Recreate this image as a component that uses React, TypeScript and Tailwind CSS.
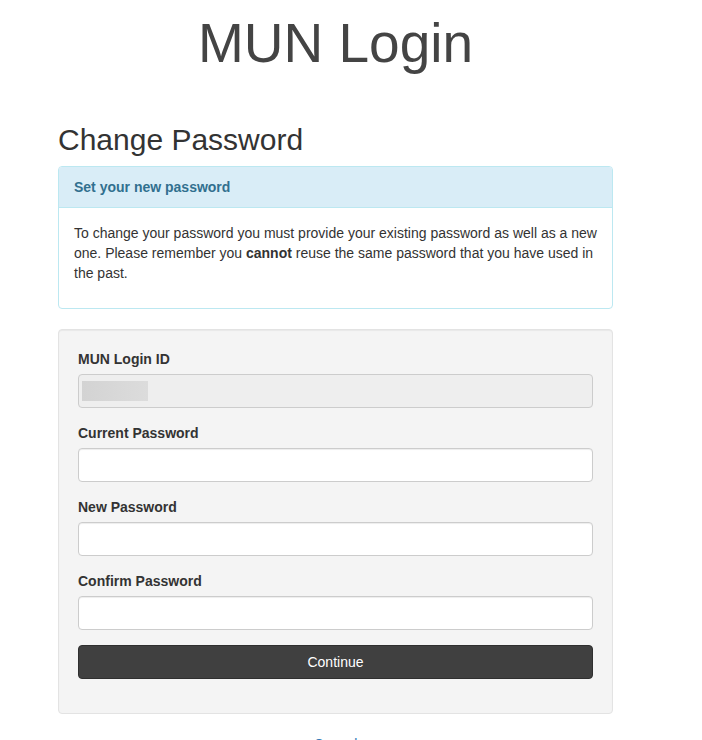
export default function App() {
  return (
    <div className="min-h-screen bg-white font-['Liberation_Sans',Arial,sans-serif] text-[14px] leading-[20px] text-[#333]">
      <div className="ml-[58px] w-[555px]">
        <h1 className="mt-[13px] mb-[50px] text-center text-[55px] leading-[60px] font-normal text-[#444]">
          MUN Login
        </h1>

        <h2 className="mb-[10px] text-[30px] leading-[33px] font-normal text-[#333]">
          Change Password
        </h2>

        <div className="mb-[20px] rounded border border-[#bce8f1] bg-white">
          <div className="rounded-t-[3px] border-b border-[#bce8f1] bg-[#d9edf7] px-[15px] py-[10px] font-bold text-[#31708f]">
            Set your new password
          </div>
          <div className="p-[15px]">
            <p className="mb-[10px]">
              To change your password you must provide your existing password as well as a new
              one. Please remember you <b>cannot</b> reuse the same password that you have used in
              the past.
            </p>
          </div>
        </div>

        <div className="rounded border border-[#e3e3e3] bg-[#f4f4f4] p-[19px] shadow-[inset_0_1px_1px_rgba(0,0,0,0.05)]">
          <div className="mb-[15px]">
            <label className="mb-[5px] block font-bold">MUN Login ID</label>
            <div className="flex h-[34px] items-center rounded border border-[#ccc] bg-[#eee] px-[3px]">
              <div className="h-[20px] w-[66px] bg-gradient-to-r from-[#d3d3d3] to-[#dcdcdc]" />
            </div>
          </div>

          <Field label="Current Password" />
          <Field label="New Password" />
          <Field label="Confirm Password" />

          <div className="mb-[15px]">
            <button className="block h-[34px] w-full rounded border border-[#2f2f2f] bg-[#404040] text-[14px] text-white">
              Continue
            </button>
          </div>
        </div>

        <div className="mt-[20px] text-center">
          <a className="text-[#337ab7]" href="#">
            Cancel
          </a>
        </div>
      </div>
    </div>
  );
}

function Field({ label }: { label: string }) {
  return (
    <div className="mb-[15px]">
      <label className="mb-[5px] block font-bold">{label}</label>
      <input
        type="password"
        className="block h-[34px] w-full rounded border border-[#ccc] bg-white px-[12px] shadow-[inset_0_1px_1px_rgba(0,0,0,0.075)] outline-none"
      />
    </div>
  );
}
